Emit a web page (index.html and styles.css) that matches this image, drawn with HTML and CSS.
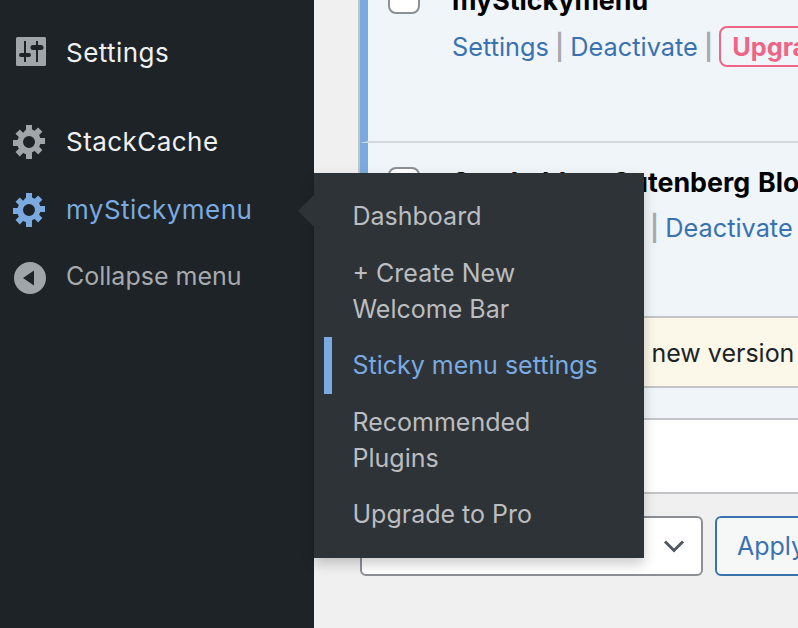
FILE: index.html
```html
<!DOCTYPE html>
<html lang="en">
<head>
<meta charset="utf-8">
<title>Plugins</title>
<link rel="stylesheet" href="styles.css">
</head>
<body>
<div class="page">
  <nav class="sidebar">
    <a class="nav-item nav-settings">
      <svg class="nav-icon" viewBox="0 0 34 34"><rect x="4" y="2" width="30" height="29" rx="1.500" fill="#a0a5aa"/><path fill="#1d2327" d="M12 6h2v12h3a2 2 0 0 1 0 4h-3v5h-2v-5H9a2 2 0 0 1 0-4h3zM24 6h2v4h3a2 2 0 0 1 0 5h-3v12h-2V15h-3a2 2 0 0 1 0-5h3z"/></svg>
      <span>Settings</span>
    </a>
    <a class="nav-item nav-stack">
      <svg class="nav-icon nav-icon-low" viewBox="0 0 34 34"><use href="#gear"/></svg>
      <span>StackCache</span>
    </a>
    <a class="nav-item nav-active">
      <svg class="nav-icon nav-icon-low" viewBox="0 0 34 34"><use href="#gear"/></svg>
      <span>myStickymenu</span>
    </a>
    <a class="nav-item nav-collapse">
      <svg class="nav-icon nav-icon-low" viewBox="0 0 34 34"><path fill="#a0a5aa" fill-rule="evenodd" d="M18 2a16 16 0 1 1 0 32 16 16 0 0 1 0-32zm4 8.500L11 18l11 7.500z"/></svg>
      <span>Collapse menu</span>
    </a>
  </nav>
  <main class="content">
    <div class="plugin-table">
      <div class="row row-first">
        <span class="check"></span>
        <div class="row-body">
          <div class="plugin-name">myStickymenu</div>
          <div class="actions"><a>Settings</a><i>|</i><a>Deactivate</a><i>|</i><a class="upgrade">Upgrade</a></div>
        </div>
      </div>
      <div class="row row-second">
        <span class="check"></span>
        <div class="row-body">
          <div class="plugin-name">Stackable – Gutenberg Blocks</div>
          <div class="actions actions-second"><a>Plugin Settings</a><i>|</i><a>Deactivate</a></div>
        </div>
      </div>
      <div class="notice">There is a new version of</div>
      <div class="strip"></div>
      <div class="row-white"></div>
    </div>
    <div class="bulk">
      <div class="select">
        <svg class="chevron" viewBox="0 0 22 14"><path d="M2 2.500l9 9 9-9" fill="none" stroke="#50575e" stroke-width="3"/></svg>
      </div>
      <a class="apply">Apply</a>
    </div>
  </main>
</div>
<aside class="flyout">
  <span class="flyout-arrow"></span>
  <a class="fly-item">Dashboard</a>
  <a class="fly-item">+ Create New<br>Welcome Bar</a>
  <a class="fly-item fly-current">Sticky menu settings</a>
  <a class="fly-item">Recommended<br>Plugins</a>
  <a class="fly-item">Upgrade to Pro</a>
</aside>
<svg class="defs" width="0" height="0"><defs><path id="gear" fill="currentColor" fill-rule="evenodd" d="M14 0h6v4.600l2.800 1.200 3.300-3.300 4.300 4.300-3.300 3.300 1.200 2.900H33v6h-4.700l-1.200 2.800 3.300 3.300-4.300 4.300-3.300-3.300-2.800 1.200V34h-6v-4.700l-2.900-1.200-3.300 3.300-4.300-4.300 3.300-3.300L5.600 21H1v-6h4.600l1.200-2.900-3.300-3.300 4.300-4.300 3.300 3.300L14 4.600zm3 11a6 6 0 1 0 0 12 6 6 0 0 0 0-12z"/></defs></svg>
</body>
</html>
```
FILE: styles.css
```css
* { box-sizing: border-box; }
html, body { margin: 0; padding: 0; height: 100%; overflow: hidden; }
body { font-family: Inter, "Liberation Sans", sans-serif; background: #f0f0f1; position: relative; }
a { text-decoration: none; }
.page { display: flex; height: 628px; width: 798px; overflow: hidden; }
.sidebar { width: 314px; flex: none; background: #1d2327; padding-top: 34px; }
.nav-item { display: flex; align-items: center; gap: 20px; padding-left: 12px; height: 36px; font-size: 26px; letter-spacing: .45px; color: #f0f0f1; }
.nav-icon { width: 34px; height: 34px; flex: none; }
.nav-icon-low { margin-top: 2px; }
.nav-settings { margin-bottom: 53px; }
.nav-stack { margin-bottom: 32px; }
.nav-stack .nav-icon { color: #a0a5aa; }
.nav-active { color: #7aaae0; margin-bottom: 31px; }
.nav-collapse { color: #a7aaad; font-size: 25px; letter-spacing: 0; }
.content { flex: 1; min-width: 0; padding-left: 44px; margin-top: -34px; overflow: hidden; }
.plugin-table { width: 480px; border: 2px solid #c3c4c7; border-width: 0 0 2px 2px; }
.row { background: #f0f5fa; border-left: 8px solid #7aaae0; display: flex; gap: 32px; padding-left: 20px; }
.row-first { height: 177px; border-bottom: 2px solid #d5d8dc; padding-top: 16px; }
.row-second { height: 175px; padding-top: 24px; }
.check { width: 32px; height: 32px; flex: none; background: #fff; border: 2px solid #8c8f94; border-radius: 8px; }
.plugin-name { font-weight: 700; font-size: 26.800px; color: #000; line-height: 36px; white-space: nowrap; }
.row-second .plugin-name { margin-top: -3px; word-spacing: 1.500px; }
.actions { display: flex; align-items: center; gap: 6.200px; margin-top: 7.500px; font-size: 25.300px; white-space: nowrap; }
.actions a { color: #3a72b0; }
.actions i { font-style: normal; font-weight: 600; color: #a7aaad; }
.actions-second { margin-top: 12px; }
.actions-second a:first-child { word-spacing: 14px; }
.upgrade { border: 2px solid #ee6586; border-radius: 8px; padding: 3px 11px; font-weight: 700; color: #ee6586 !important; }
.notice { height: 72px; background: #fbf8e9; border-top: 2px solid #c3c4c7; border-bottom: 2px solid #c3c4c7; margin-top: -2px; font-size: 25px; color: #1d2327; line-height: 70px; padding-left: 168px; white-space: nowrap; }
.strip { height: 32px; background: #f0f5fa; border-bottom: 2px solid #c3c4c7; }
.row-white { height: 72px; background: #fff; }
.bulk { display: flex; gap: 12px; margin-top: 22px; margin-left: 2px; }
.select { width: 343px; height: 60px; background: #fff; border: 2px solid #8c8f94; border-radius: 6px; display: flex; align-items: center; justify-content: flex-end; padding-right: 16px; flex: none; }
.chevron { width: 22px; height: 14px; }
.apply { width: 120px; height: 60px; flex: none; border: 2px solid #3a72b0; border-radius: 6px; background: #f6f7f7; color: #3a72b0; font-size: 25px; line-height: 56px; padding-left: 20px; }
.flyout { position: absolute; left: 314px; top: 173px; width: 330px; height: 385px; background: #2e3337; box-shadow: 0 6px 12px rgba(0,0,0,.2); padding-top: 15.200px; }
.flyout-arrow { position: absolute; left: -16px; top: 22px; border: 16px solid transparent; border-left: 0; border-right-color: #2e3337; }
.fly-item { display: block; padding: 10.250px 10px 10.250px 38.500px; font-size: 25px; line-height: 36px; color: #bbbdc0; }
.fly-current { color: #7aaae0; position: relative; }
.fly-current::before { content: ""; position: absolute; left: 10px; top: 0; bottom: 0; width: 8px; background: #7aaae0; }
.defs { position: absolute; }
```
